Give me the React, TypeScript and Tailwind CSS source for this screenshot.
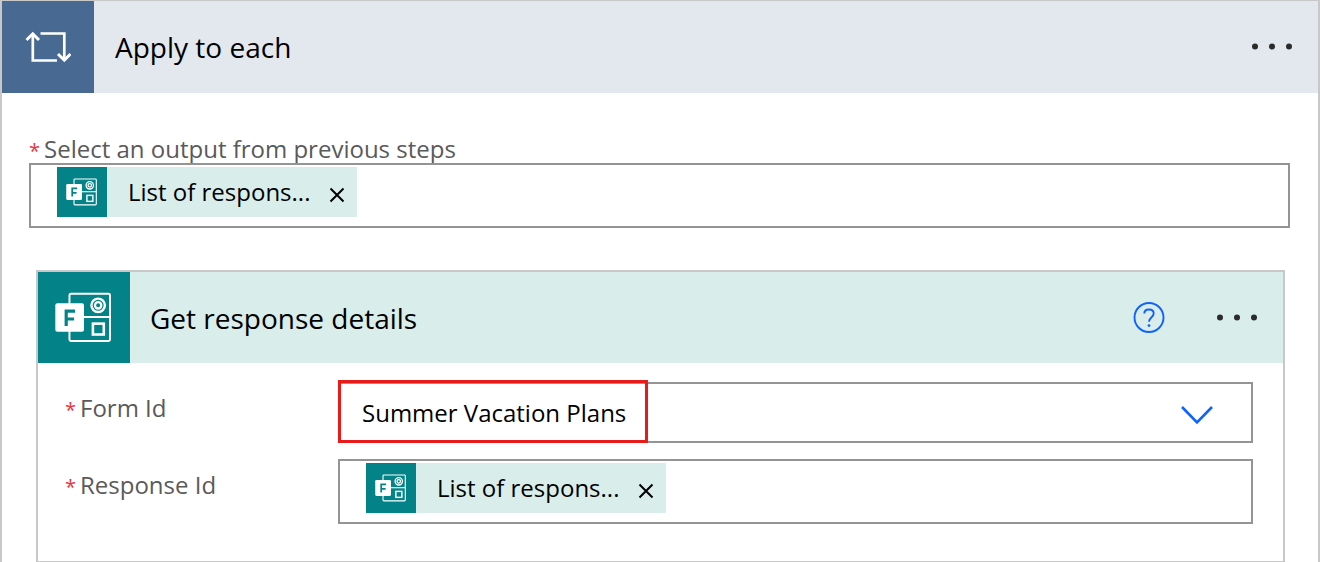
import { useState } from "react";

function FormsLogo({ className }: { className: string }) {
  return (
    <svg viewBox="0 0 92 92" className={className} fill="none" aria-hidden="true">
      <g stroke="#fff" strokeWidth="2">
        <rect x="31.3" y="22" width="41" height="47.700" rx="1.5" />
        <path d="M46 45.5H73" />
        <circle cx="60.300" cy="33.700" r="6.800" strokeWidth="2.400" />
        <circle cx="60.300" cy="33.700" r="3.200" strokeWidth="2.300" />
        <rect x="55" y="52.200" width="11" height="11" strokeWidth="2.600" />
      </g>
      <rect x="17" y="31.500" width="29" height="29" rx="2" fill="#fff" />
      <path d="M28 54.500V39.500H37M28 47.500H36" stroke="#038387" strokeWidth="3.200" />
    </svg>
  );
}

function MoreButton({ label }: { label: string }) {
  return (
    <button type="button" aria-label={label} className="flex h-10 w-12 items-center justify-center">
      <svg viewBox="0 0 42 8" className="h-2 w-[42px]" fill="#2b2b2b" aria-hidden="true">
        <circle cx="4" cy="3.500" r="3" />
        <circle cx="21" cy="3.500" r="3" />
        <circle cx="38" cy="3.500" r="3" />
      </svg>
    </button>
  );
}

function Token({ onRemove }: { onRemove: () => void }) {
  return (
    <span className="flex h-[50px] w-[300px] shrink-0 items-center bg-[#d9edeb] text-black">
      <span className="size-[50px] bg-[#038387]">
        <FormsLogo className="size-[50px]" />
      </span>
      <span className="flex-1 pl-[21px] text-2xl">List of respons...</span>
      <button
        type="button"
        aria-label="Remove List of responses"
        onClick={onRemove}
        className="flex h-full w-10 items-center justify-center pt-1.5"
      >
        <svg viewBox="0 0 16 16" className="size-4" stroke="#000" strokeWidth="2" aria-hidden="true">
          <path d="M1.500 1.500L14.500 14.500M14.500 1.500L1.500 14.500" />
        </svg>
      </button>
    </span>
  );
}

function TokenField({ id }: { id: string }) {
  const [filled, setFilled] = useState(true);
  return (
    <div className="flex h-[65px] min-w-0 flex-1 items-start border-2 border-[#949494] bg-white pl-[26px] pt-0.5">
      {filled && <Token onRemove={() => setFilled(false)} />}
      <input id={id} type="text" className="h-[50px] min-w-0 flex-1 bg-transparent px-2 text-2xl outline-none" />
    </div>
  );
}

function FieldLabel({ htmlFor, text, className }: { htmlFor: string; text: string; className: string }) {
  return (
    <label htmlFor={htmlFor} className={className}>
      <span className="mr-1 text-xl text-[#e8353b]">*</span>
      {text}
    </label>
  );
}

export default function App() {
  return (
    <main className="border-x-2 border-t border-[#c8c8c8] bg-white font-['Open_Sans','Noto_Sans',sans-serif] text-[#5a5a5a]">
      <header className="flex h-[92px] items-center bg-[#e3e8ef] pr-[22px]">
        <span className="flex size-[92px] shrink-0 items-center justify-center bg-[#486991]">
          <svg viewBox="0 0 46 32" className="h-8 w-[46px]" fill="none" stroke="#fff" strokeWidth="2.700" aria-hidden="true">
            <path d="M7.800 3V29.500H32" />
            <path d="M1.500 9L7.800 2.800L14 9" strokeWidth="3" />
            <path d="M15.500 2.500H39.300V29" />
            <path d="M33 23L39.300 29.200L45.500 23" strokeWidth="3" />
          </svg>
        </span>
        <h1 className="flex-1 pl-[21px] text-[28px] text-black">Apply to each</h1>
        <MoreButton label="Apply to each menu" />
      </header>

      <div className="pl-[27px] pr-7 pt-10">
        <FieldLabel htmlFor="previous-output" text="Select an output from previous steps" className="block h-[30px] text-2xl" />
        <div className="flex">
          <TokenField id="previous-output" />
        </div>

        <section className="ml-[7px] mr-[5px] mt-[42px] border-2 border-b border-[#c8c8c8]">
          <header className="flex h-[91px] items-center bg-[#d9edeb] pr-[22px]">
            <span className="h-[91px] w-[92px] shrink-0 bg-[#038387]">
              <FormsLogo className="h-[91px] w-[92px]" />
            </span>
            <h2 className="flex-1 pl-5 text-[28px] text-black">Get response details</h2>
            <button type="button" aria-label="Help" className="mr-12">
              <svg viewBox="0 0 32 32" className="size-8" fill="none" stroke="#0f62fe" strokeWidth="1.900" aria-hidden="true">
                <circle cx="16" cy="15.500" r="14.500" />
                <path d="M11.300 11.600C11.300 8.900 13.300 7.500 16 7.500S20.700 9.100 20.700 11.600C20.700 15.200 16 15.300 16 19.800" />
                <circle cx="16" cy="23.600" r="1.400" fill="#0f62fe" stroke="none" />
              </svg>
            </button>
            <MoreButton label="Get response details menu" />
          </header>

          <div className="flex flex-col gap-4 pb-[37px] pl-[27px] pr-[30px] pt-[19px]">
            <div className="flex">
              <FieldLabel htmlFor="form-id" text="Form Id" className="w-[273px] shrink-0 pt-2.5 text-2xl" />
              <div className="relative flex-1">
                <select
                  id="form-id"
                  className="block h-[61px] w-full appearance-none border-2 border-[#949494] bg-white pl-[22px] text-2xl text-black"
                >
                  <option>Summer Vacation Plans</option>
                </select>
                <svg
                  viewBox="0 0 34 20"
                  className="pointer-events-none absolute right-[39px] top-[23px] h-5 w-[34px]"
                  fill="none"
                  stroke="#0f62fe"
                  strokeWidth="2.600"
                  aria-hidden="true"
                >
                  <path d="M2 2L17 17.500L32 2" />
                </svg>
                <span className="pointer-events-none absolute -top-0.5 bottom-0 left-0 w-[310px] border-3 border-[#e81a1a]" />
              </div>
            </div>
            <div className="flex">
              <FieldLabel htmlFor="response-id" text="Response Id" className="w-[273px] shrink-0 pt-2.5 text-2xl" />
              <TokenField id="response-id" />
            </div>
          </div>
        </section>
      </div>
    </main>
  );
}
